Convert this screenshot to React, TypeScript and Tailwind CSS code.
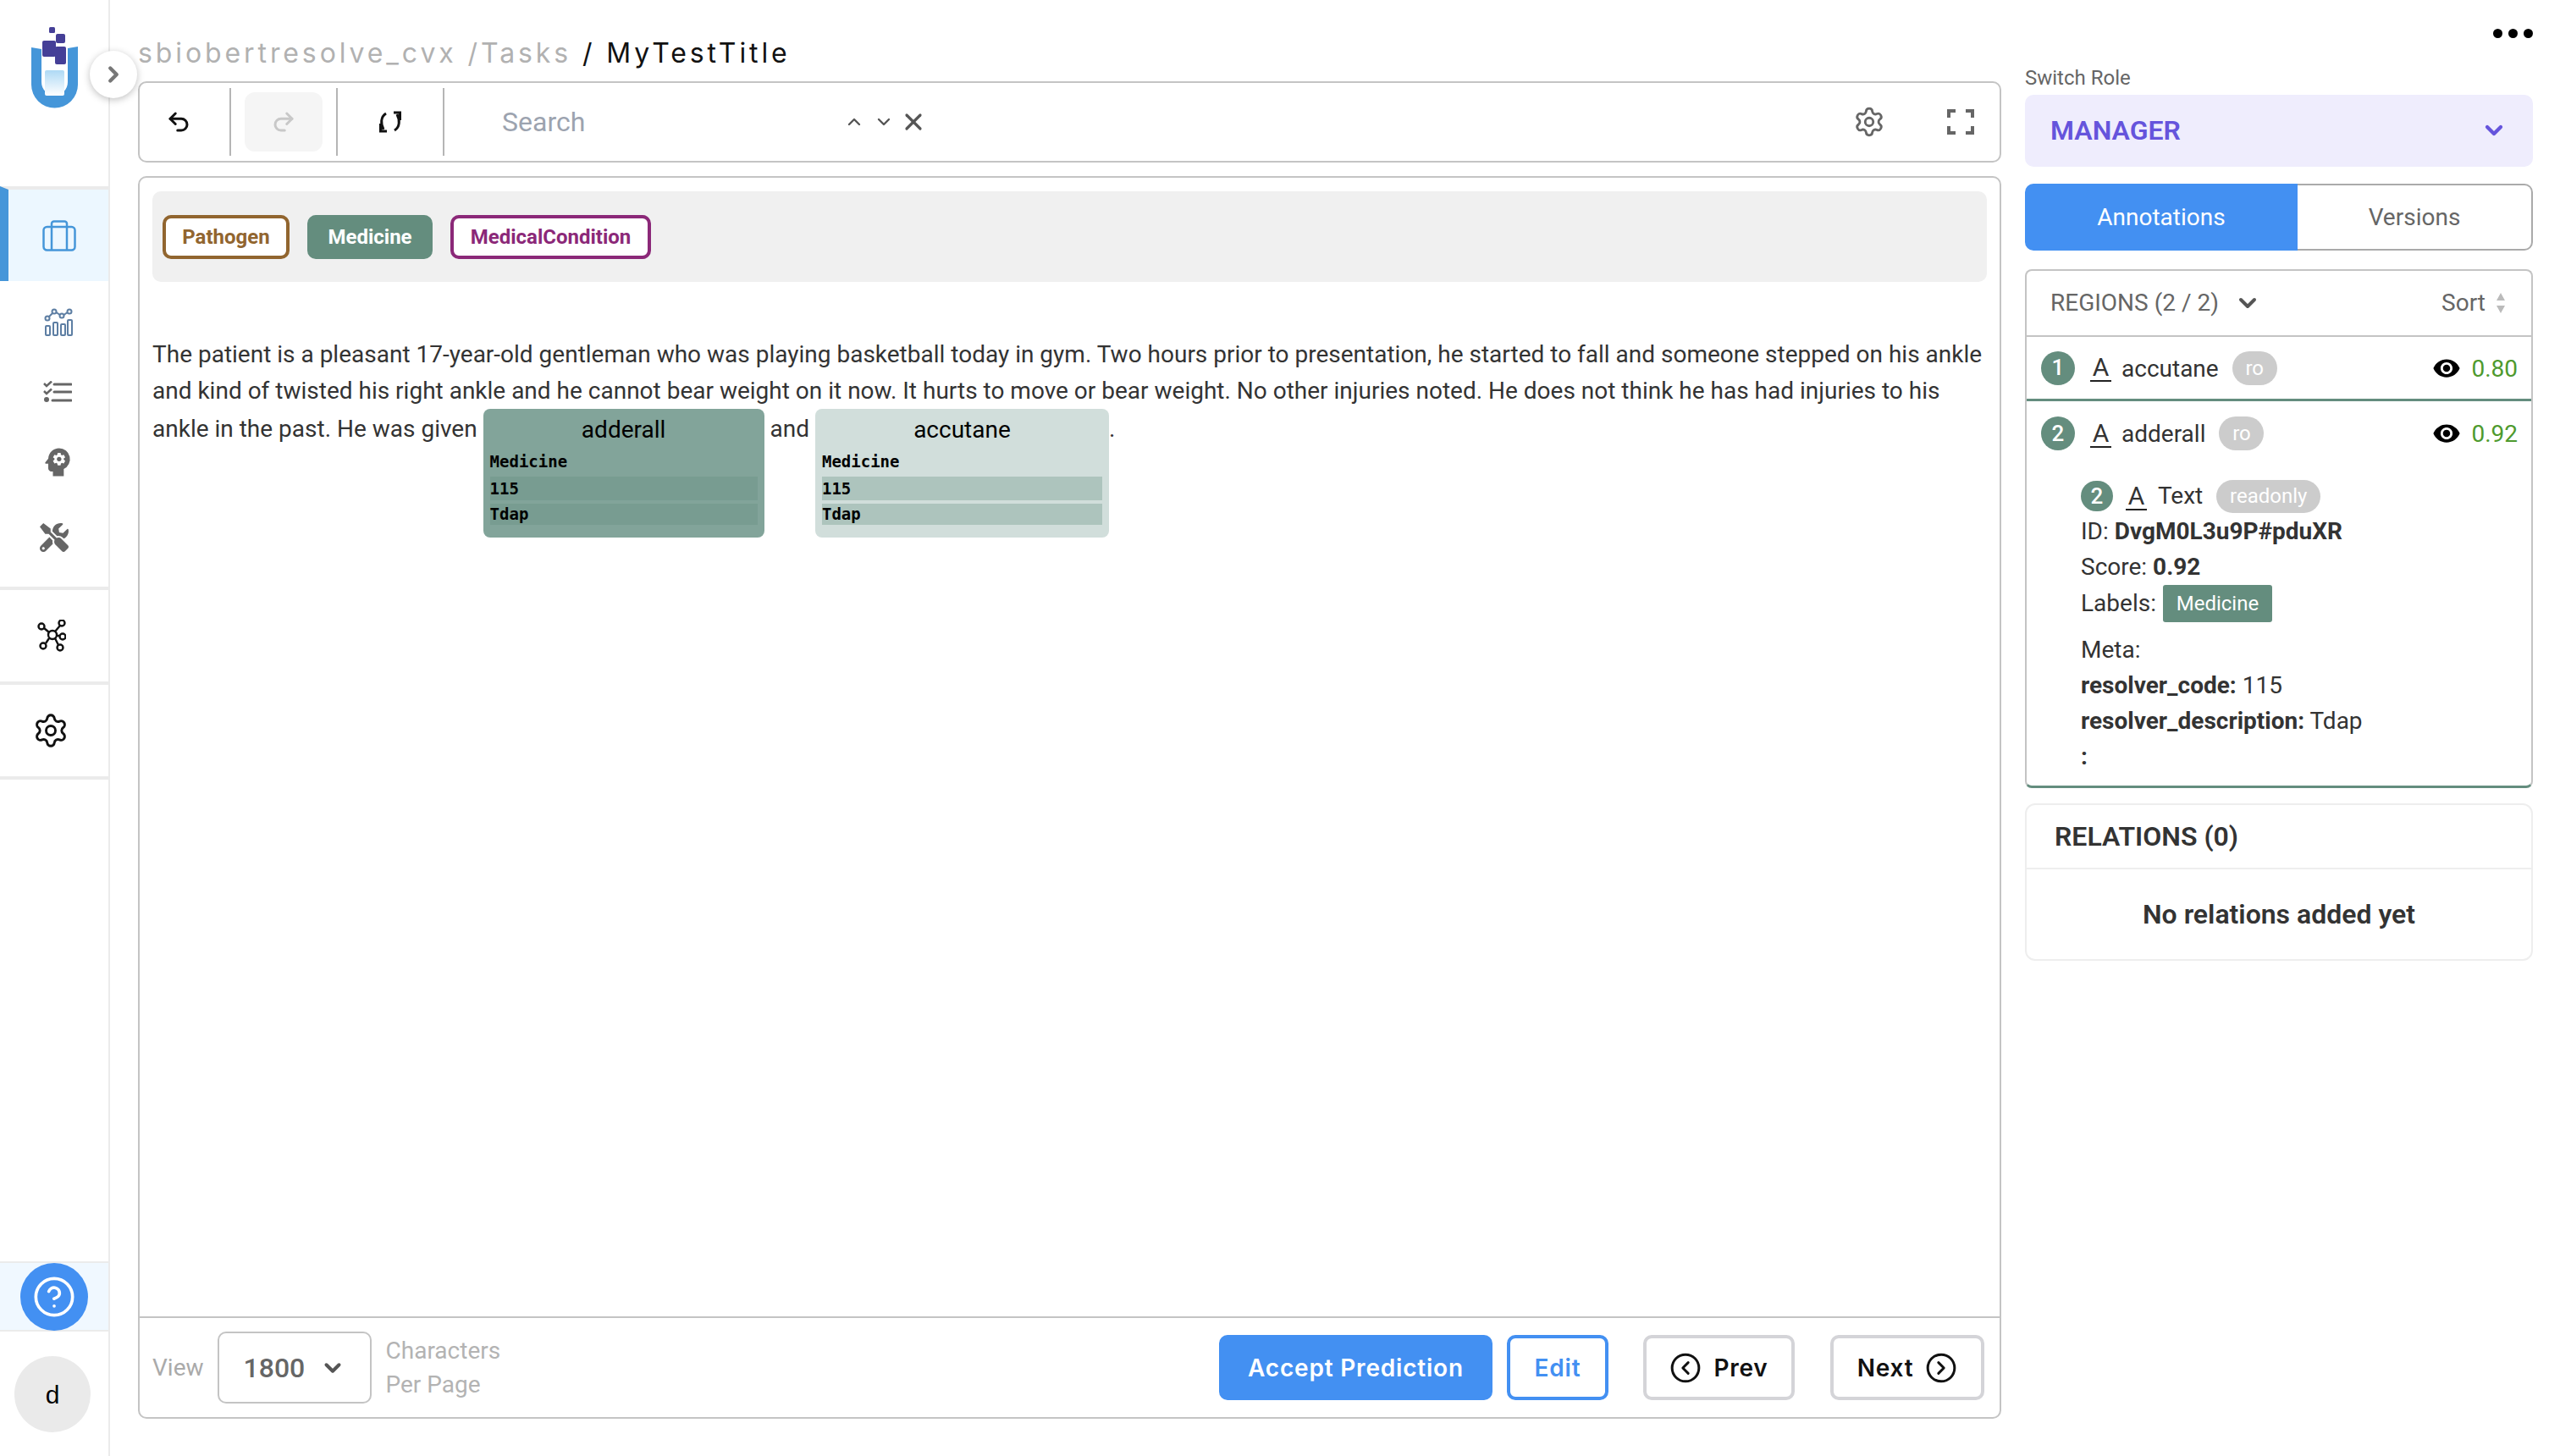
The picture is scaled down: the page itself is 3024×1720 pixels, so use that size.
import { ChevronDown, ChevronRight, ChevronUp, CircleChevronLeft, CircleChevronRight, CircleHelp, Settings, Undo2, Redo2, X } from 'lucide-react';
import { FaTools } from 'react-icons/fa';
import { MdPsychology, MdVisibility } from 'react-icons/md';

function Logo() {
  return (
    <svg width="55" height="96" viewBox="0 0 55 96">
      <defs>
        <linearGradient id="liquid" x1="0" y1="0" x2="0" y2="1">
          <stop offset="0" stopColor="#aed9f5" />
          <stop offset="1" stopColor="#ffffff" />
        </linearGradient>
      </defs>
      <path d="M0 24 L12 26 V65 A15.5 15.5 0 0 0 43 65 V25 L55 23 V68 A27.5 27.5 0 0 1 0 68 Z" fill="#4596d9" />
      <rect x="16" y="51" width="23" height="30" rx="2" fill="url(#liquid)" />
      <rect x="21" y="0" width="7" height="7" rx="1.5" fill="#453f97" />
      <rect x="29" y="8" width="11" height="11" rx="2" fill="#453f97" />
      <rect x="13" y="16" width="16" height="19" rx="2" fill="#453f97" />
      <rect x="28" y="23" width="13" height="21" rx="2" fill="#453f97" />
    </svg>
  );
}

function ChartIcon() {
  return (
    <svg width="34" height="34" viewBox="0 0 34 34" fill="none" stroke="#5d7ea3" strokeWidth="2">
      <rect x="2" y="21" width="5" height="11" rx="1" />
      <rect x="11" y="17" width="5" height="15" rx="1" />
      <rect x="20" y="19" width="5" height="13" rx="1" />
      <rect x="28" y="14" width="5" height="18" rx="1" />
      <circle cx="4" cy="12" r="2.5" />
      <circle cx="12" cy="4" r="2.5" />
      <circle cx="21" cy="9" r="2.5" />
      <circle cx="30" cy="4" r="2.5" />
      <path d="M6 10 L10 6 M14.5 5 L18.8 8 M23.5 8 L27.6 5" />
    </svg>
  );
}

function ChecklistIcon() {
  return (
    <svg width="34" height="26" viewBox="0 0 34 26" fill="none" stroke="#666666" strokeWidth="3">
      <path d="M1 3 L4 6 L10 0.5 M1 12 L4 15 L10 9.5" strokeWidth="2.5" />
      <circle cx="4" cy="22" r="3" fill="#666666" stroke="none" />
      <path d="M13 4 H33 M13 13 H33 M11 23 H33" strokeLinecap="round" />
    </svg>
  );
}

function NodesIcon() {
  return (
    <svg width="34" height="38" viewBox="0 0 34 38" fill="none" stroke="#111111" strokeWidth="2.4">
      <circle cx="18" cy="18" r="5" />
      <circle cx="5" cy="8" r="3.5" />
      <circle cx="29" cy="4" r="3.5" />
      <circle cx="30" cy="20" r="3.5" />
      <circle cx="7" cy="31" r="3.5" />
      <circle cx="27" cy="33" r="3.5" />
      <path d="M8 10 L14 15 M27 7 L21 14 M23 19 H26.5 M14 22 L10 28 M21 22 L25 30" />
    </svg>
  );
}

function SyncIcon() {
  return (
    <svg width="26" height="26" viewBox="0 0 26 26" fill="none" stroke="#111111" strokeWidth="3">
      <path d="M8 3 C1.5 7 1.5 15 5 22" />
      <path d="M1.5 15 V24 H9" />
      <path d="M18 23 C24.5 19 24.5 11 21 4" />
      <path d="M24.5 11 V2 H17" />
    </svg>
  );
}

function FullscreenIcon() {
  return (
    <svg width="32" height="30" viewBox="0 0 32 30" fill="none" stroke="#666666" strokeWidth="4">
      <path d="M10 2 H2 V10 M22 2 H30 V10 M2 20 V28 H10 M30 20 V28 H22" />
    </svg>
  );
}

function SortIcon() {
  return (
    <svg width="12" height="24" viewBox="0 0 12 24" fill="#bbbbbb">
      <path d="M6 0 L11 9 H1 Z M1 15 H11 L6 24 Z" />
    </svg>
  );
}

function TextMark() {
  return <span className="block w-[25px] h-[33px] border-b-2 border-[#222] text-[30px] leading-[31px] text-center text-[#333]">A</span>;
}

function Badge({ n, size }: { n: number; size: string }) {
  return <span className={`${size} shrink-0 rounded-full bg-[#648d7e] text-white flex items-center justify-center text-[26px] font-medium`}>{n}</span>;
}

function RegionRow({ n, name, score, border }: { n: number; name: string; score: string; border?: boolean }) {
  return (
    <div className={`h-[76px] flex items-center pl-[17px] pr-[16px] ${border ? 'border-b-[3px] border-[#648d7e]' : ''}`}>
      <Badge n={n} size="w-[40px] h-[40px]" />
      <span className="ml-[18px]"><TextMark /></span>
      <span className="ml-[12px] pt-[2px] text-[28px] text-[#333]">{name}</span>
      <span className="ml-[16px] h-[40px] w-[53px] rounded-full bg-[#cccccc] text-white text-[24px] flex items-center justify-center">ro</span>
      <MdVisibility className="ml-auto text-black" size={34} />
      <span className="ml-[12px] pt-[2px] text-[28px] text-[#4e9a2e]">{score}</span>
    </div>
  );
}

function Annotated({ name, width, bg, row }: { name: string; width: string; bg: string; row: string }) {
  return (
    <span className={`${width} ${bg} inline-block align-top h-[152px] rounded-[8px] px-[8px] text-black`}>
      <span className="block text-center h-[50px] leading-[50px]">{name}</span>
      <span className="block font-['DejaVu_Sans_Mono',monospace] text-[19px] leading-[28px] font-bold">
        <span className="block h-[30px] leading-[24px]">Medicine</span>
        <span className={`block h-[28px] ${row}`}>115</span>
        <span className={`block h-[25px] mt-[4px] leading-[24px] ${row}`}>Tdap</span>
      </span>
    </span>
  );
}

export default function App() {
  return (
    <div className="w-[3024px] h-[1720px] flex bg-white font-['Roboto',sans-serif] overflow-hidden relative">
      {/* Sidebar */}
      <div className="w-[130px] shrink-0 h-full border-r-2 border-[#ebebeb] flex flex-col">
        <div className="h-[220px] pt-[32px] pl-[37px]">
          <Logo />
        </div>
        <div className="border-t-4 border-[#ebebeb] h-[112px] bg-[#ecf7ff] border-l-[10px] border-l-[#4596d9] flex items-center pl-[40px]">
          <svg width="40" height="37" viewBox="0 0 40 37" fill="none" stroke="#4596d9" strokeWidth="2.5">
            <rect x="1.5" y="8" width="37" height="27.5" rx="4" />
            <path d="M11 35.5 V8 M29 35.5 V8 M11 8 V4 A3 3 0 0 1 14 1.5 H26 A3 3 0 0 1 29 4 V8" />
          </svg>
        </div>
        <div className="h-[361px] flex flex-col">
          <div className="h-[32px] mt-[32px] pl-[52px]"><ChartIcon /></div>
          <div className="h-[26px] mt-[54px] pl-[51px]"><ChecklistIcon /></div>
          <div className="h-[36px] mt-[48px] pl-[46px]"><MdPsychology size={44} className="text-[#666666]" /></div>
          <div className="h-[36px] mt-[58px] pl-[47px]"><FaTools size={34} className="text-[#666666]" /></div>
        </div>
        <div className="h-[112px] border-t-4 border-[#ebebeb] flex items-center pl-[44px]"><NodesIcon /></div>
        <div className="h-[112px] border-t-4 border-[#ebebeb] flex items-center pl-[38px]">
          <Settings size={44} strokeWidth={1.6} className="text-[#111111]" />
        </div>
        <div className="flex-1 border-t-4 border-[#ebebeb]" />
        <div className="h-[83px] bg-[#f0f8ff] border-t-2 border-b-2 border-[#ebebeb] flex items-center pl-[24px]">
          <div className="w-[80px] h-[80px] rounded-full bg-[#4390f2] flex items-center justify-center">
            <CircleHelp size={52} strokeWidth={1.7} className="text-white" />
          </div>
        </div>
        <div className="h-[147px] pt-[29px] pl-[17px]">
          <div className="w-[90px] h-[90px] rounded-full bg-[#eaeaea] flex items-center justify-center text-[30px] text-black font-['Liberation_Sans',sans-serif]">d</div>
        </div>
      </div>

      {/* Collapse toggle */}
      <div className="absolute left-[106px] top-[60px] w-[56px] h-[56px] rounded-full bg-white shadow-[0_2px_8px_rgba(0,0,0,0.25)] flex items-center justify-center">
        <ChevronRight size={30} strokeWidth={3.5} className="text-[#777777]" />
      </div>

      {/* Main */}
      <div className="w-[2201px] ml-[33px] shrink-0 flex flex-col h-[1676px]">
        <div className="h-[96px] pt-[41px] font-['Inter',sans-serif] text-[32px] leading-[44px] tracking-[3.9px] whitespace-nowrap">
          <span className="text-[#b1b1b1]">sbiobertresolve_cvx /Tasks </span>
          <span className="text-[#111111]">/ MyTestTitle</span>
        </div>

        <div className="h-[96px] border-2 border-[#c4c4c4] rounded-[10px] flex items-center">
          <div className="w-[108px] h-[80px] border-r-2 border-[#b5b5b5] flex items-center justify-center pr-[14px]">
            <Undo2 size={30} strokeWidth={2.4} className="text-[#111111]" />
          </div>
          <div className="w-[126px] h-[80px] border-r-2 border-[#b5b5b5] flex items-center justify-center">
            <div className="w-[92px] h-[70px] rounded-[12px] bg-[#f5f5f5] flex items-center justify-center">
              <Redo2 size={30} strokeWidth={2.4} className="text-[#c8c8c8]" />
            </div>
          </div>
          <div className="w-[126px] h-[80px] border-r-2 border-[#b5b5b5] flex items-center justify-center">
            <SyncIcon />
          </div>
          <span className="ml-[68px] text-[32px] text-[#9ca3af] w-[400px]">Search</span>
          <ChevronUp size={24} strokeWidth={2.4} className="ml-[4px] text-[#555555]" />
          <ChevronDown size={24} strokeWidth={2.4} className="ml-[11px] text-[#555555]" />
          <X size={32} strokeWidth={2.4} className="ml-[7px] text-[#555555]" />
          <Settings size={38} strokeWidth={1.8} className="ml-auto text-[#666666]" />
          <span className="ml-[73px] mr-[30px]"><FullscreenIcon /></span>
        </div>

        <div className="mt-[16px] flex-1 border-2 border-[#c4c4c4] rounded-[10px] flex flex-col">
          <div className="flex-1 px-[15px] pt-[16px]">
            <div className="h-[107px] bg-[#f0f0f0] rounded-[10px] flex items-center pl-[12px] gap-[21px] text-[24px] font-bold">
              <span className="h-[52px] w-[150px] rounded-[10px] border-4 border-[#91652f] text-[#91652f] bg-white flex items-center justify-center">Pathogen</span>
              <span className="h-[52px] w-[148px] rounded-[10px] bg-[#648d7e] text-white flex items-center justify-center">Medicine</span>
              <span className="h-[52px] w-[237px] rounded-[10px] border-4 border-[#8b2878] text-[#8b2878] bg-white flex items-center justify-center">MedicalCondition</span>
            </div>
            <div className="mt-[65px] text-[28px] leading-[42.5px] text-[#333333]">
              The patient is a pleasant 17-year-old gentleman who was playing basketball today in gym. Two hours prior to presentation, he started to fall and someone stepped on his ankle and kind of twisted his right ankle and he cannot bear weight on it now. It hurts to move or bear weight. No other injuries noted. He does not think he has had injuries to his{' '}
              <span className="leading-[48px]">ankle in the past. He was given</span>{' '}
              <Annotated name="adderall" width="w-[332px]" bg="bg-[#82a49a]" row="bg-[#789c91]" />{' '}
              <span className="leading-[48px]">and</span>{' '}
              <Annotated name="accutane" width="w-[347px]" bg="bg-[#d1dedb]" row="bg-[#adc4bd]" />
              <span className="leading-[48px]">.</span>
            </div>
          </div>
          <div className="h-[119px] border-t-2 border-[#c4c4c4] flex items-center pl-[15px] pr-[18px]">
            <span className="text-[28px] text-[#aaaaaa]">View</span>
            <div className="ml-[16px] w-[182px] h-[85px] border-2 border-[#c4c4c4] rounded-[10px] flex items-center pl-[29px] text-[32px] font-medium text-[#666666]">
              1800
              <ChevronDown size={30} strokeWidth={3.2} className="ml-[18px] text-[#555555]" />
            </div>
            <div className="ml-[17px] text-[28px] leading-[40px] text-[#b3b3b3]">
              <div>Characters</div>
              <div>Per Page</div>
            </div>
            <div className="ml-auto flex items-center font-['Inter',sans-serif] text-[28px] font-semibold tracking-[0.8px]">
              <span className="w-[323px] h-[77px] rounded-[10px] bg-[#4390f2] text-white flex items-center justify-center">Accept Prediction</span>
              <span className="ml-[17px] w-[120px] h-[77px] rounded-[10px] border-4 border-[#4390f2] text-[#4390f2] flex items-center justify-center">Edit</span>
              <span className="ml-[41px] w-[179px] h-[77px] rounded-[10px] border-4 border-[#d4d4d8] text-[#111111] flex items-center justify-center gap-[14px]">
                <CircleChevronLeft size={38} strokeWidth={1.9} />Prev
              </span>
              <span className="ml-[42px] w-[182px] h-[77px] rounded-[10px] border-4 border-[#d4d4d8] text-[#111111] flex items-center justify-center gap-[14px]">
                Next<CircleChevronRight size={38} strokeWidth={1.9} />
              </span>
            </div>
          </div>
        </div>
      </div>

      {/* Right panel */}
      <div className="w-[600px] ml-[28px] shrink-0 flex flex-col">
        <div className="h-[80px] pt-[34px] flex justify-end gap-[7px]">
          <span className="w-[11px] h-[11px] rounded-full bg-black" />
          <span className="w-[11px] h-[11px] rounded-full bg-black" />
          <span className="w-[11px] h-[11px] rounded-full bg-black" />
        </div>
        <div className="h-[32px] text-[24px] leading-[24px] text-[#666666]">Switch Role</div>
        <div className="h-[85px] rounded-[10px] bg-[#efedfd] flex items-center justify-between pl-[30px] pr-[30px] pb-[2px] text-[32px] font-semibold text-[#6554dc]">
          MANAGER
          <ChevronDown size={32} strokeWidth={3.2} />
        </div>
        <div className="mt-[20px] h-[79px] flex text-[28px]">
          <div className="w-[322px] rounded-l-[10px] bg-[#4390f2] text-white flex items-center justify-center">Annotations</div>
          <div className="flex-1 rounded-r-[10px] border-2 border-l-0 border-[#aaaaaa] text-[#666666] flex items-center justify-center">Versions</div>
        </div>
        <div className="mt-[22px] h-[613px] border-2 border-[#c4c4c4] border-b-[3px] border-b-[#648d7e] rounded-[8px] flex flex-col">
          <div className="h-[78px] shrink-0 border-b-2 border-[#c4c4c4] flex items-center pl-[28px] pr-[30px] text-[28px] text-[#666666]">
            REGIONS (2 / 2)
            <ChevronDown size={32} strokeWidth={3} className="ml-[18px] text-[#555555]" />
            <span className="ml-auto mr-[12px]">Sort</span>
            <SortIcon />
          </div>
          <RegionRow n={1} name="accutane" score="0.80" border />
          <RegionRow n={2} name="adderall" score="0.92" />
          <div className="pl-[64px] pt-[15px] text-[28px] leading-[42px] text-[#333333]">
            <div className="h-[42px] flex items-center">
              <Badge n={2} size="w-[38px] h-[36px]" />
              <span className="ml-[15px]"><TextMark /></span>
              <span className="ml-[13px]">Text</span>
              <span className="ml-[16px] w-[123px] h-[39px] rounded-full bg-[#cccccc] text-white text-[24px] flex items-center justify-center">readonly</span>
            </div>
            <div>ID: <b>DvgM0L3u9P#pduXR</b></div>
            <div>Score: <b>0.92</b></div>
            <div className="flex items-center">
              Labels:
              <span className="ml-[8px] w-[129px] h-[44px] rounded-[3px] bg-[#648d7e] text-white text-[24px] flex items-center justify-center">Medicine</span>
            </div>
            <div className="mt-[12px]">Meta:</div>
            <div><b>resolver_code:</b> 115</div>
            <div><b>resolver_description:</b> Tdap</div>
            <div className="font-bold">:</div>
          </div>
        </div>
        <div className="mt-[18px] h-[186px] border-2 border-[#eeeeee] rounded-[12px] flex flex-col text-[#333333] font-semibold text-[32px]">
          <div className="h-[76px] border-b-2 border-[#eeeeee] flex items-center pl-[33px]">RELATIONS (0)</div>
          <div className="flex-1 flex items-center justify-center">No relations added yet</div>
        </div>
      </div>
    </div>
  );
}
